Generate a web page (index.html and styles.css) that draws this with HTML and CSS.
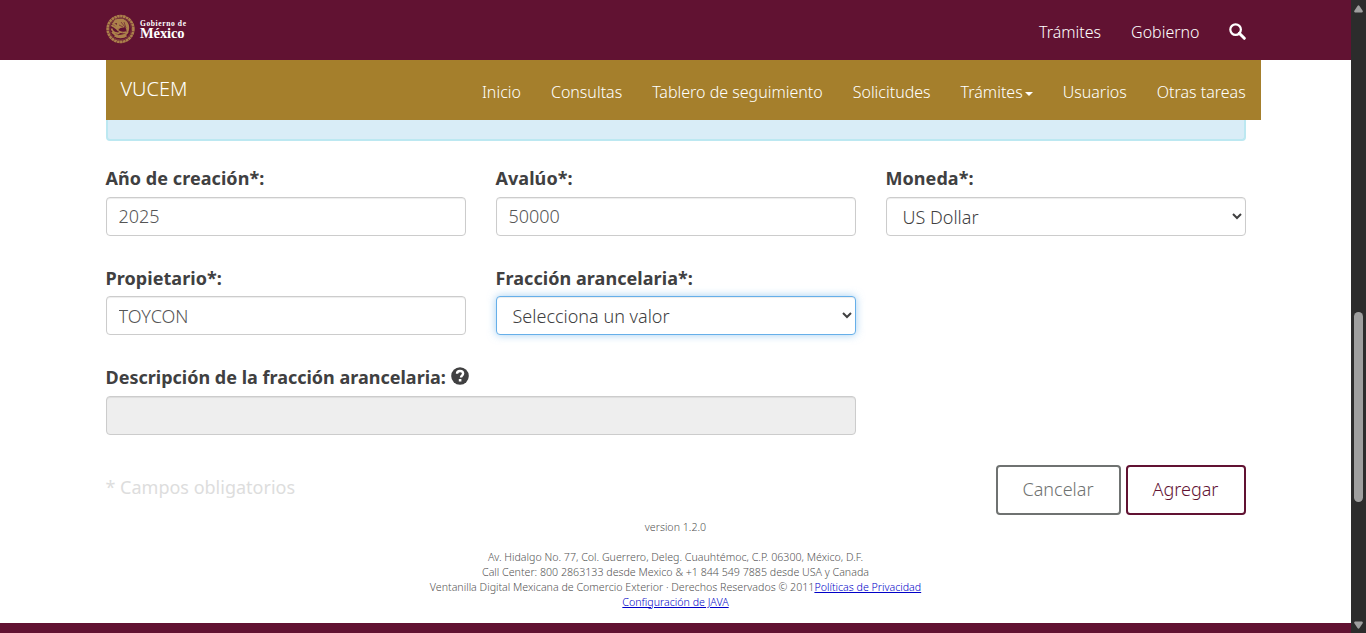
FILE: index.html
```html
<!DOCTYPE html>
<html lang="es">
<head>
<meta charset="utf-8">
<title>VUCEM</title>
<link rel="stylesheet" href="styles.css">
</head>
<body>
<div class="viewport">
  <div class="page">
    <header class="gov-bar">
      <div class="gov-inner">
        <a class="brand">
          <svg class="seal" width="29" height="30" viewBox="0 0 29 30" fill="none" stroke="#ac814b">
            <circle cx="14.5" cy="15" r="12.9" stroke-width="2.6" stroke-dasharray="2.6 .4"/>
            <circle cx="14.5" cy="15" r="11" stroke-width="1" opacity=".35"/>
            <path d="M13 5c4-1 8 1 9.500 5s.5 9-3.500 12c2-4 2-7 0-9-2 1-4 0-6 2l-5-1c2-2 3-3 3-5l-4 1c0-3 2-5 6-5z" fill="#ac814b" stroke="none"/>
            <path d="M5.500 11c2 2 4.500 2 6.500 5s5 3 8 2M5.500 14.500c1 4 5 5 8 4.500M6 18c3 4 11 5.500 16 0M8.500 21.500c3 2.500 9 2.500 12 0M6.500 9l4 3M9 6l3 3" stroke-width="1.8"/>
            <path d="M15 8l4 5M18 8l2 6M13 11l4 2M11 18l5-3M12 21l5-2" stroke="#611232" stroke-width=".6"/>
          </svg>
          <span class="brand-text"><span class="brand-small">Gobierno de</span><span class="brand-big">México</span></span>
        </a>
        <nav class="gov-nav">
          <a>Trámites</a>
          <a>Gobierno</a>
          <svg class="search" width="17" height="17" viewBox="0 0 17 17" fill="none" stroke="#fff"><circle cx="6.6" cy="6.6" r="5.3" stroke-width="2.2"/><path d="M10.3 10.3l5 5" stroke-width="3" stroke-linecap="round"/></svg>
        </nav>
      </div>
    </header>
    <div class="sub-bar">
      <a class="sub-title">VUCEM</a>
      <nav class="sub-nav">
        <a>Inicio</a><a>Consultas</a><a>Tablero de seguimiento</a><a>Solicitudes</a><a>Trámites<i class="caret"></i></a><a>Usuarios</a><a>Otras tareas</a>
      </nav>
    </div>
    <main class="content">
      <div class="info-alert"></div>
      <form class="form">
        <div class="field"><label>Año de creación*:</label><input class="control" value="2025"></div>
        <div class="field"><label>Avalúo*:</label><input class="control" value="50000"></div>
        <div class="field"><label>Moneda*:</label><select class="control"><option>US Dollar</option></select></div>
        <div class="field"><label>Propietario*:</label><input class="control" value="TOYCON"></div>
        <div class="field"><label>Fracción arancelaria*:</label><select class="control active"><option>Selecciona un valor</option></select></div>
        <div class="field wide"><label class="plain">Descripción de la fracción arancelaria: <svg class="help" width="18" height="18" viewBox="0 0 18 18"><circle cx="9" cy="9" r="8.8" fill="#404041"/><path d="M6 6.800C6 4.900 7.200 4 9 4s3.100 1 3.100 2.600c0 1.900-2.100 2-2.100 3.800" fill="none" stroke="#fff" stroke-width="2.400"/><path d="M7.800 12h2.600v2.500H7.800z" fill="#fff"/></svg></label><input class="control" disabled></div>
      </form>
      <div class="actions">
        <span class="required">* Campos obligatorios</span>
        <button class="btn cancel">Cancelar</button>
        <button class="btn add">Agregar</button>
      </div>
    </main>
    <div class="legal">
      <p class="version">version 1.2.0</p>
      <p>Av. Hidalgo No. 77, Col. Guerrero, Deleg. Cuauhtémoc, C.P. 06300, México, D.F.</p>
      <p>Call Center: 800 2863133 desde Mexico &amp; +1 844 549 7885 desde USA y Canada</p>
      <p>Ventanilla Digital Mexicana de Comercio Exterior · Derechos Reservados © 2011<a>Políticas de Privacidad</a></p>
      <p><a>Configuración de JAVA</a></p>
    </div>
    <div class="bottom-bar"></div>
  </div>
  <div class="scrollbar">
    <svg width="9" height="8" viewBox="0 0 9 8"><path d="M1 7.5Q-.4 7 .5 5.500L3.500 1Q4.500-.4 5.500 1L8.500 5.500Q9.400 7 8 7.500z" fill="#9f9f9f"/></svg>
    <div class="thumb"></div>
    <svg width="9" height="8" viewBox="0 0 9 8"><path d="M1 .5Q-.4 1 .5 2.500L3.500 7Q4.500 8.400 5.500 7L8.500 2.500Q9.400 1 8 .5z" fill="#9f9f9f"/></svg>
  </div>
</div>
</body>
</html>
```
FILE: styles.css
```css
* { box-sizing: border-box; }
body { margin: 0; font: 300 18px/26px "Noto Sans", sans-serif; color: #404041; background: #fff; overflow: hidden; }
p { margin: 0; }
.viewport { display: flex; height: 633px; }
.page { flex: 1; display: flex; flex-direction: column; }
.gov-bar { height: 60px; background: #611232; flex: none; }
.gov-inner { width: 1140px; margin-left: 106px; height: 60px; display: flex; justify-content: space-between; }
.brand { display: flex; gap: 5px; padding-top: 14px; color: #fff; }
.brand-text { display: flex; flex-direction: column; padding-top: 5px; font-family: "Liberation Serif", serif; white-space: nowrap; }
.brand-small { font-size: 7.5px; line-height: 9px; font-weight: 700; letter-spacing: .62px; }
.brand-big { font-size: 14.5px; line-height: 10px; font-weight: 700; letter-spacing: -.1px; }
.gov-nav { display: flex; gap: 30px; padding-top: 19px; font-size: 16px; color: #fff; }
.gov-nav a:nth-child(2) { margin-right: -.5px; }
.search { margin-top: 4px; }
.sub-bar { width: 1155px; height: 60px; margin-left: 106px; flex: none; padding: 0 15.3px 0 14.4px; background: #a57f2c; color: #fff; display: flex; justify-content: space-between; }
.sub-title { font-size: 20px; padding-top: 16px; }
.sub-nav { display: flex; gap: 30px; font-size: 16px; padding-top: 19px; white-space: nowrap; }
.caret { display: inline-block; margin-left: 2px; vertical-align: middle; border-top: 4px solid #fff; border-left: 4px solid transparent; border-right: 4px solid transparent; }
.content { width: 1140px; margin-left: 105.5px; }
.info-alert { height: 21px; background: #d9edf7; border: 2px solid #bce8f1; border-top: 0; border-radius: 0 0 4px 4px; }
.form { display: grid; grid-template-columns: repeat(3, 360px); column-gap: 30px; row-gap: 28.8px; padding-top: 24.4px; }
.field { display: flex; flex-direction: column; gap: 5.6px; }
.field label { font-weight: 700; height: 26px; white-space: nowrap; letter-spacing: .06px; }
.field .plain { letter-spacing: 0; }
.wide { grid-column: 1 / 3; }
.help { vertical-align: -1px; }
.control { width: 100%; height: 39px; padding: 6px 12px; margin: 0; font: 300 18px/25px "Noto Sans", sans-serif; color: #555; background: #fff; border: 1px solid #ccc; border-radius: 4px; box-shadow: inset 0 1px 1px rgba(0,0,0,.075); outline: 0; }
select.control { color: #404041; }
.control:disabled { background: #eee; }
.control.active { border-color: #66afe9; box-shadow: inset 0 1px 1px rgba(0,0,0,.075), 0 0 8px rgba(102,175,233,.6); }
.actions { display: flex; gap: 5px; padding-top: 30.2px; }
.required { flex: 1; padding-top: 9px; color: #ddd; font-weight: 400; }
.btn { height: 50px; width: 125px; padding: 0 0 2px; font: 300 18px/26px "Noto Sans", sans-serif; background: #fff; border: 2px solid #6f7271; border-radius: 4px; color: #6f7271; }
.add { width: 120px; border-color: #611232; color: #611232; }
.legal { padding-top: 5px; text-align: center; font-size: 10.65px; line-height: 15px; white-space: nowrap; color: #545454; }
.version { margin-bottom: 15px; }
.legal a { color: #0000c8; text-decoration: underline; }
.bottom-bar { height: 10px; margin-top: auto; background: #611232; }
.scrollbar { width: 15px; background: #2c2c2c; display: flex; flex-direction: column; align-items: center; padding: 5px 0 4px; }
.thumb { width: 9px; height: 190px; margin: 299px 0 auto; border-radius: 5px; background: #9f9f9f; }
```
